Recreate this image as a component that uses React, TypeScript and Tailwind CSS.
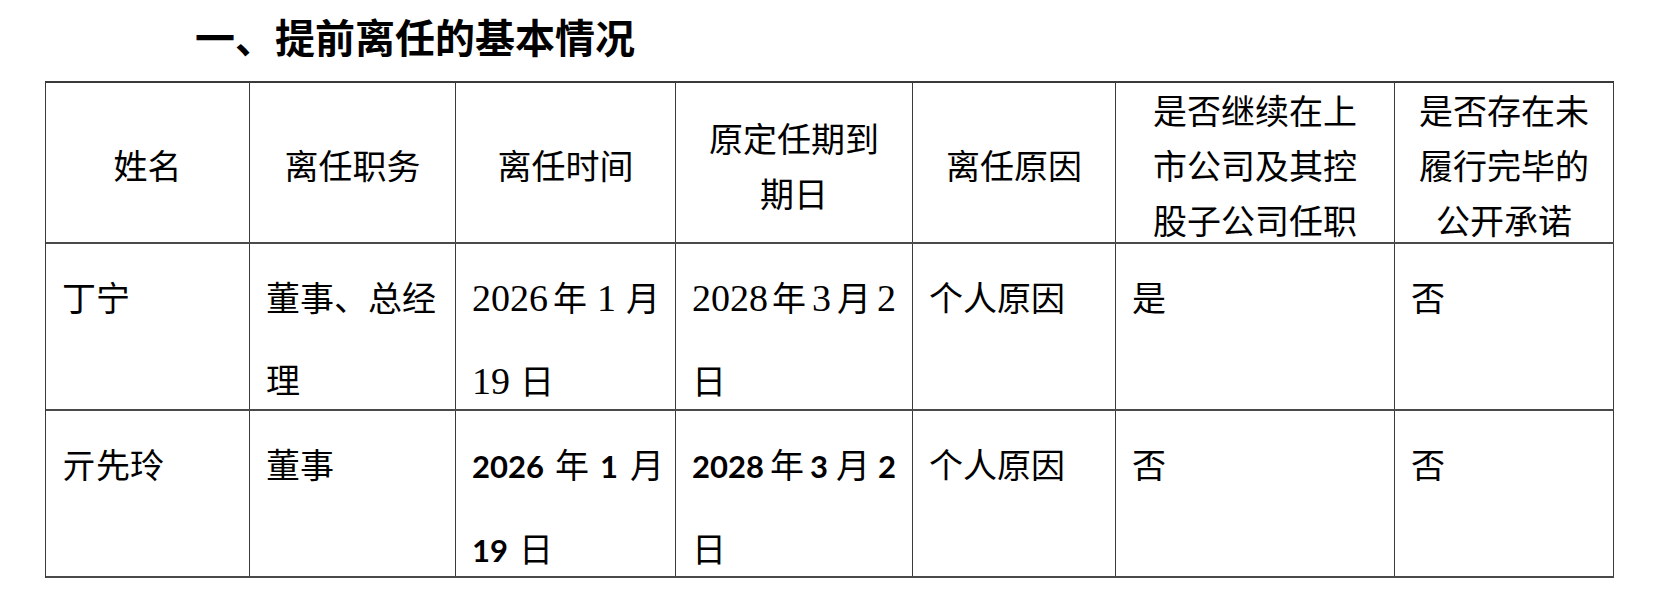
import React from "react";

const COLS = "grid grid-cols-[204px_206px_220px_237px_203px_279px_219px]";
const CJK = "font-['Noto_Sans_CJK_SC',sans-serif]";

function HeadCell({ children }: { children: React.ReactNode }) {
  return (
    <div className="border-r border-[#3a3a3a] flex items-center justify-center text-center pt-[4px] leading-[55px] text-[34px]">
      <div>{children}</div>
    </div>
  );
}

function BodyCell({ children }: { children: React.ReactNode }) {
  return (
    <div className="border-r border-[#3a3a3a] pl-[16px] pt-[12px] leading-[82px] text-[34px] whitespace-nowrap overflow-visible min-h-0">
      {children}
    </div>
  );
}

function SerifNum({ children }: { children: React.ReactNode }) {
  return <span className="font-['Liberation_Serif',serif] text-[38px]">{children}</span>;
}

function BoldNum({ children }: { children: React.ReactNode }) {
  return <span className="font-['Lato',sans-serif] font-bold text-[31px]">{children}</span>;
}

export default function App() {
  return (
    <div className={`w-[1662px] h-[606px] bg-white text-black ${CJK}`}>
      <div className="h-[81px] pl-[195px] text-[40px] font-bold leading-[72px]">
        一、提前离任的基本情况
      </div>
      <div className="ml-[45px] w-[1569px] border-l border-t-2 border-[#3a3a3a]">
        <div className={`${COLS} grid-rows-[159px] border-b-2 border-[#4a4a4a]`}>
          <HeadCell>姓名</HeadCell>
          <HeadCell>离任职务</HeadCell>
          <HeadCell>离任时间</HeadCell>
          <HeadCell>
            原定任期到
            <br />
            期日
          </HeadCell>
          <HeadCell>离任原因</HeadCell>
          <HeadCell>
            是否继续在上
            <br />
            市公司及其控
            <br />
            股子公司任职
          </HeadCell>
          <HeadCell>
            是否存在未
            <br />
            履行完毕的
            <br />
            公开承诺
          </HeadCell>
        </div>
        <div className={`${COLS} grid-rows-[165px] border-b-2 border-[#4a4a4a]`}>
          <BodyCell>丁宁</BodyCell>
          <BodyCell>
            董事、总经
            <br />
            理
          </BodyCell>
          <BodyCell>
            <SerifNum>2026</SerifNum>
            <span className="ml-[5px] mr-[10px]">年</span>
            <SerifNum>1</SerifNum>
            <span className="ml-[10px]">月</span>
            <br />
            <SerifNum>19</SerifNum>
            <span className="ml-[10px]">日</span>
          </BodyCell>
          <BodyCell>
            <SerifNum>2028</SerifNum>
            <span className="ml-[4px] mr-[6px]">年</span>
            <SerifNum>3</SerifNum>
            <span className="ml-[6px] mr-[6px]">月</span>
            <SerifNum>2</SerifNum>
            <br />
            日
          </BodyCell>
          <BodyCell>个人原因</BodyCell>
          <BodyCell>是</BodyCell>
          <BodyCell>否</BodyCell>
        </div>
        <div className={`${COLS} grid-rows-[165px] border-b-2 border-[#4a4a4a]`}>
          <BodyCell>亓先玲</BodyCell>
          <BodyCell>董事</BodyCell>
          <BodyCell>
            <BoldNum>2026</BoldNum>
            <span className="mx-[11px]">年</span>
            <BoldNum>1</BoldNum>
            <span className="ml-[12px]">月</span>
            <br />
            <BoldNum>19</BoldNum>
            <span className="ml-[11px]">日</span>
          </BodyCell>
          <BodyCell>
            <BoldNum>2028</BoldNum>
            <span className="mx-[6px]">年</span>
            <BoldNum>3</BoldNum>
            <span className="mx-[8px]">月</span>
            <BoldNum>2</BoldNum>
            <br />
            日
          </BodyCell>
          <BodyCell>个人原因</BodyCell>
          <BodyCell>否</BodyCell>
          <BodyCell>否</BodyCell>
        </div>
      </div>
    </div>
  );
}
